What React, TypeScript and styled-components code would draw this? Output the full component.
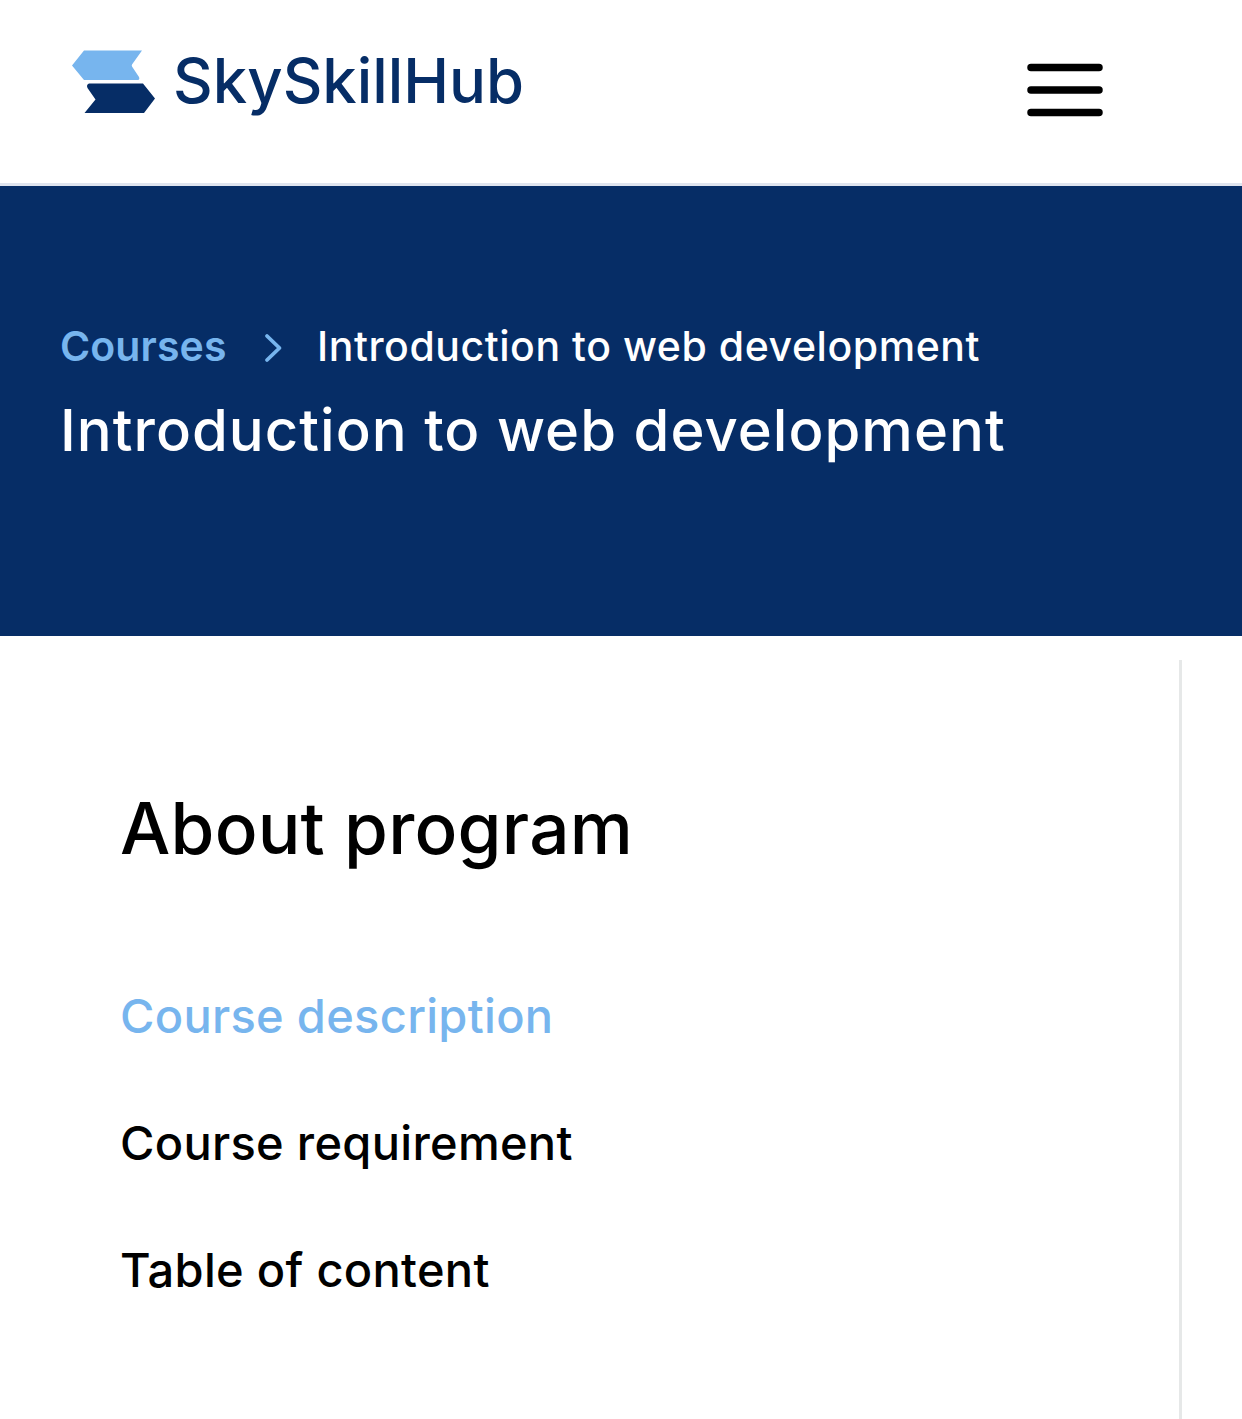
import React from "react";
import styled, { createGlobalStyle } from "styled-components";

const navy = "#062d66";
const sky = "#77b5ee";

const Global = createGlobalStyle`
  * { box-sizing: border-box; }
  body { margin: 0; background: #fff; color: #000; font-family: Inter, "Open Sans", sans-serif; font-weight: 500; }
  h1, h2, ul { margin: 0; padding: 0; font-weight: 500; }
`;

const Page = styled.div`
  display: flex;
  flex-direction: column;
  height: 1419px;
  overflow: hidden;
`;

const Header = styled.header`
  display: flex;
  align-items: flex-start;
  justify-content: space-between;
  height: 186px;
  padding: 50px 139px 0 72px;
  border-bottom: 3px solid #dfe4ee;
`;

const Brand = styled.a`
  display: flex;
  align-items: flex-start;
  gap: 17px;
`;

const Wordmark = styled.span`
  color: ${navy};
  font-size: 61.5px;
  font-weight: 500;
  letter-spacing: 0;
  line-height: 62px;
  white-space: nowrap;
`;

const MenuButton = styled.button`
  display: flex;
  margin-top: 13px;
  padding: 0;
  border: 0;
  background: none;
`;

const Icon = styled.svg`
  display: block;
  flex: none;
`;

const Hero = styled.section`
  height: 450px;
  padding: 130px 60px 0;
  background: ${navy};
  color: #fff;
`;

const Crumbs = styled.nav`
  display: flex;
  align-items: center;
  height: 60px;
  font-size: 41px;
  line-height: 60px;
  letter-spacing: 0.55px;
  white-space: nowrap;
`;

const CrumbLink = styled.a`
  width: 166px;
  color: ${sky};
  font-weight: 600;
  letter-spacing: 0.1px;
`;

const CrumbIcon = styled(Icon)`
  margin: 0 34px 0 38px;
`;

const HeroTitle = styled.h1`
  font-size: 58px;
  line-height: 90px;
  letter-spacing: 1.03px;
  margin-top: 9px;
  white-space: nowrap;
`;

const Panel = styled.aside`
  flex: 1;
  width: 1182px;
  margin-top: 24px;
  padding: 120px 0 0 120px;
  border-right: 3px solid #e6e8e8;
`;

const PanelTitle = styled.h2`
  font-size: 71px;
  line-height: 96px;
  letter-spacing: 0.2px;
`;

const Links = styled.ul`
  display: flex;
  flex-direction: column;
  gap: 67px;
  margin-top: 110px;
  list-style: none;
`;

const LinkItem = styled.li<{ $active?: boolean }>`
  color: ${(p) => (p.$active ? sky : "#000")};
  font-size: 47px;
  line-height: 60px;
  letter-spacing: 0.3px;
`;

const sections = ["Course description", "Course requirement", "Table of content"];

export default function App() {
  return (
    <Page>
      <Global />
      <Header>
        <Brand>
          <Icon width="84" height="64" viewBox="0 0 84 64">
            <path d="M12 .5H70L60 14.5Q59.500 15.500 60 16.500L67 27Q68 29.500 66 30H12L0 15.500Z" fill={sky} />
            <path d="M17 33.500H71L83 48.500L72 63H12.500L23.500 49.500L15.500 38Q14 34.500 17 33.500Z" fill={navy} />
          </Icon>
          <Wordmark>SkySkillHub</Wordmark>
        </Brand>
        <MenuButton aria-label="Menu">
          <Icon width="76" height="54" viewBox="0 0 76 54">
            <path d="M4 4.500H72M4 27H72M4 49.500H72" stroke="#000" strokeWidth="7.500" strokeLinecap="round" />
          </Icon>
        </MenuButton>
      </Header>
      <Hero>
        <Crumbs>
          <CrumbLink>Courses</CrumbLink>
          <CrumbIcon width="19" height="34" viewBox="0 0 19 34">
            <path d="M3 7L15.500 19L3 31" fill="none" stroke={sky} strokeWidth="3.800" strokeLinecap="round" strokeLinejoin="round" />
          </CrumbIcon>
          <span>Introduction to web development</span>
        </Crumbs>
        <HeroTitle>Introduction to web development</HeroTitle>
      </Hero>
      <Panel>
        <PanelTitle>About program</PanelTitle>
        <Links>
          {sections.map((label, i) => (
            <LinkItem key={label} $active={i === 0}>{label}</LinkItem>
          ))}
        </Links>
      </Panel>
    </Page>
  );
}
